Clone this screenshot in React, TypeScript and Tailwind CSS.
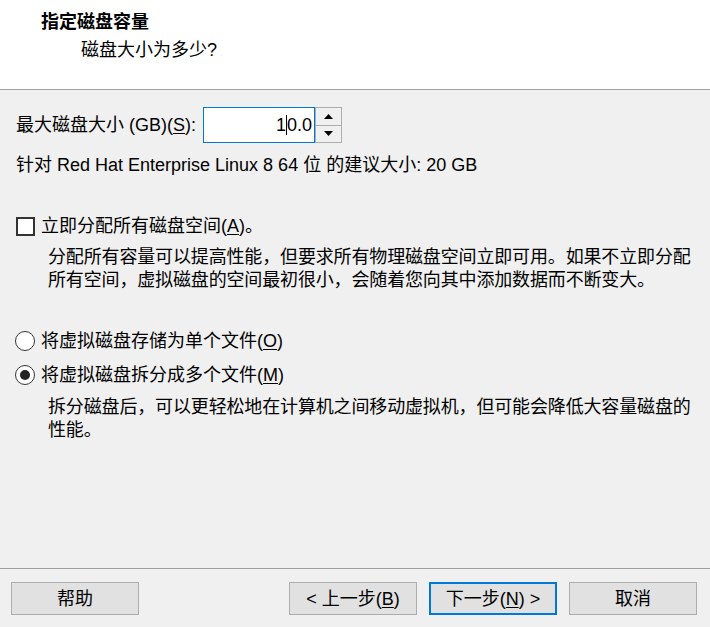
import React from "react";

function Key({ k }: { k: string }) {
  return <span className="underline underline-offset-2">{k}</span>;
}

function WizardButton({
  children,
  primary = false,
}: {
  children: React.ReactNode;
  primary?: boolean;
}) {
  return (
    <button
      className={
        "w-[128px] h-[33px] bg-[#e1e1e1] flex items-center justify-center text-[18px] leading-none " +
        (primary ? "border-2 border-[#0078d7]" : "border border-[#adadad]")
      }
    >
      {children}
    </button>
  );
}

function Arrow({ up }: { up?: boolean }) {
  return (
    <svg width="9" height="5" viewBox="0 0 9 5">
      {up ? <polygon points="0,5 9,5 4.5,0" fill="#000" /> : <polygon points="0,0 9,0 4.5,5" fill="#000" />}
    </svg>
  );
}

export default function App() {
  return (
    <div className="w-[710px] h-[627px] bg-[#f0f0f0] flex flex-col text-[18px] text-black font-['Liberation_Sans','Noto_Sans_CJK_SC',sans-serif]">
      {/* header */}
      <div className="h-[90px] bg-white border-b border-[#a0a0a0] pt-[10px]">
        <div className="pl-[41px] leading-[24px] font-bold">指定磁盘容量</div>
        <div className="pl-[81px] mt-[4px] leading-[24px]">磁盘大小为多少?</div>
      </div>

      {/* size row */}
      <div className="flex items-center h-[36px] mt-[17px] pl-[16px]">
        <div className="w-[187px] leading-[24px] whitespace-nowrap">
          最大磁盘大小 (GB)(<Key k="S" />):
        </div>
        <div className="w-[112px] h-[36px] bg-white border border-[#0078d7] flex items-center justify-end pr-[2px]">
          <span>1</span>
          <span className="inline-block w-px h-[20px] bg-black" />
          <span>0.0</span>
        </div>
        <div className="w-[27px] h-[36px] flex flex-col border border-[#adadad] bg-[#f0f0f0]">
          <div className="flex-1 flex items-center justify-center border-b border-[#adadad]">
            <Arrow up />
          </div>
          <div className="flex-1 flex items-center justify-center">
            <Arrow />
          </div>
        </div>
      </div>

      <div className="mt-[10px] pl-[16px] leading-[24px]">
        针对 Red Hat Enterprise Linux 8 64 位 的建议大小: 20 GB
      </div>

      {/* allocate now */}
      <div className="mt-[37px] pl-[16px] flex items-center leading-[24px]">
        <div className="w-[19px] h-[19px] border-2 border-[#333] bg-white" />
        <div className="ml-[6px]">
          立即分配所有磁盘空间(<Key k="A" />)。
        </div>
      </div>
      <div className="mt-[8px] pl-[48px] leading-[23px] tracking-[-0.15px]">
        <div>分配所有容量可以提高性能，但要求所有物理磁盘空间立即可用。如果不立即分配</div>
        <div>所有空间，虚拟磁盘的空间最初很小，会随着您向其中添加数据而不断变大。</div>
      </div>

      {/* file options */}
      <div className="mt-[37px] pl-[15px] flex items-center leading-[24px]">
        <div className="w-[20px] h-[20px] rounded-full border-[1.5px] border-[#333] bg-white" />
        <div className="ml-[6px]">
          将虚拟磁盘存储为单个文件(<Key k="O" />)
        </div>
      </div>
      <div className="mt-[10px] pl-[15px] flex items-center leading-[24px]">
        <div className="w-[20px] h-[20px] rounded-full border-[1.5px] border-[#333] bg-white flex items-center justify-center">
          <div className="w-[10px] h-[10px] rounded-full bg-[#222]" />
        </div>
        <div className="ml-[6px]">
          将虚拟磁盘拆分成多个文件(<Key k="M" />)
        </div>
      </div>
      <div className="mt-[9px] pl-[48px] leading-[23px] tracking-[-0.15px]">
        <div>拆分磁盘后，可以更轻松地在计算机之间移动虚拟机，但可能会降低大容量磁盘的</div>
        <div>性能。</div>
      </div>

      <div className="flex-1" />

      {/* footer */}
      <div className="border-t border-[#a0a0a0] pt-[13px] pb-[12px] pl-[11px] pr-[13px] flex">
        <WizardButton>帮助</WizardButton>
        <div className="flex-1" />
        <div className="flex gap-[12px]">
          <WizardButton>
            &lt; 上一步(<Key k="B" />)
          </WizardButton>
          <WizardButton primary>
            下一步(<Key k="N" />) &gt;
          </WizardButton>
          <WizardButton>取消</WizardButton>
        </div>
      </div>
    </div>
  );
}
